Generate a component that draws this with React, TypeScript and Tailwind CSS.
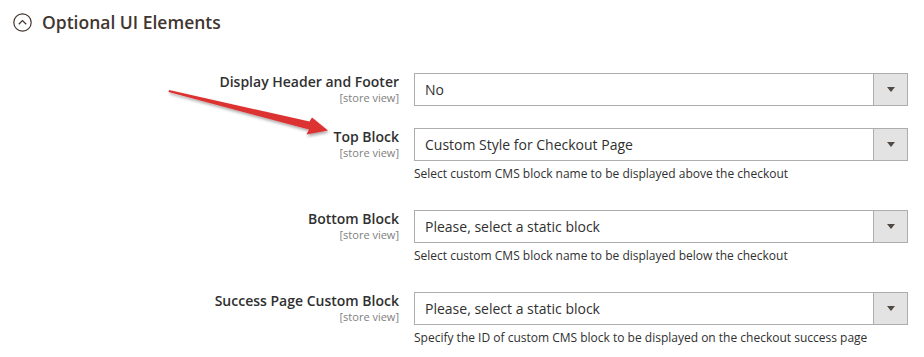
import React from 'react';

const rows = [
  { label: 'Display Header and Footer', value: 'No', note: '' },
  { label: 'Top Block', value: 'Custom Style for Checkout Page', note: 'Select custom CMS block name to be displayed above the checkout' },
  { label: 'Bottom Block', value: 'Please, select a static block', note: 'Select custom CMS block name to be displayed below the checkout' },
  { label: 'Success Page Custom Block', value: 'Please, select a static block', note: 'Specify the ID of custom CMS block to be displayed on the checkout success page' },
];

function SelectBox({ value }: { value: string }) {
  return (
    <div className="flex h-[33px] w-[494px] border border-[#adadad] bg-white">
      <div className="flex flex-1 items-center pl-[10px] text-[14px] text-[#303030]">{value}</div>
      <div className="flex w-[34px] items-center justify-center border-l border-[#adadad] bg-[#e3e3e3]">
        <svg width="8" height="5" viewBox="0 0 8 5">
          <path d="M0 0 H8 L4 5 Z" fill="#514943" />
        </svg>
      </div>
    </div>
  );
}

export default function App() {
  return (
    <div className="relative h-[357px] w-[924px] overflow-hidden bg-white font-['Open_Sans',sans-serif] text-[#303030]">
      {/* Section title */}
      <div className="flex items-center gap-[10px] pl-[13px] pt-[12px]">
        <svg width="19" height="19" viewBox="0 0 19 19">
          <circle cx="9.5" cy="9.5" r="8.7" fill="none" stroke="#41362f" strokeWidth="1.2" />
          <path d="M5.8 11.2 L9.5 7.6 L13.2 11.2" fill="none" stroke="#41362f" strokeWidth="1.3" />
        </svg>
        <h2 className="text-[17.5px] font-semibold leading-[21px] text-[#41362f]">Optional UI Elements</h2>
      </div>

      {/* Fields */}
      <div className="mt-[40px] flex flex-col gap-[22px]">
        {rows.map((row) => (
          <div key={row.label} className="flex">
            <div className="w-[399px] text-right">
              <div className="text-[14px] font-semibold leading-[18px]">{row.label}</div>
              <div className="text-[11px] leading-[13px] text-[#808080]">[store view]</div>
            </div>
            <div className="ml-[15px]">
              <SelectBox value={row.value} />
              {row.note && (
                <div className="mt-[5px] h-[22px] text-[12px] leading-[16px]">{row.note}</div>
              )}
            </div>
          </div>
        ))}
      </div>

      {/* Annotation arrow */}
      <svg className="absolute left-0 top-0" width="924" height="357" viewBox="0 0 924 357">
        <defs>
          <filter id="sh" x="-10%" y="-50%" width="120%" height="200%">
            <feDropShadow dx="1" dy="2" stdDeviation="1.5" floodColor="#000" floodOpacity="0.35" />
          </filter>
        </defs>
        <g filter="url(#sh)">
          <path d="M169 90 L309.5 121.5 L312 117.5 L328 130.5 L306.5 134.5 L309 129.5 L168.5 92 Z" fill="#dd3131" />
        </g>
      </svg>
    </div>
  );
}
